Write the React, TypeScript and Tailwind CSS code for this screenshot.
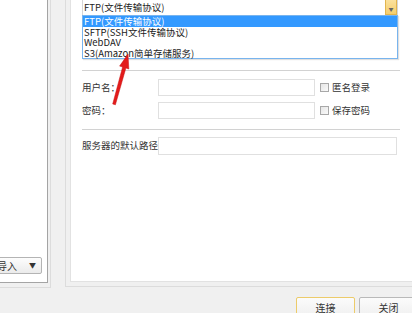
export default function App() {
  const font = { fontFamily: '"Noto Sans CJK SC", "Noto Sans", sans-serif' };
  const items = ["FTP(文件传输协议)", "SFTP(SSH文件传输协议)", "WebDAV", "S3(Amazon简单存储服务)"];

  return (
    <div
      className="relative flex h-[313px] w-[412px] flex-col overflow-hidden bg-[#f0f0f0] text-[9.5px] leading-none text-[#222]"
      style={font}
    >
      <div className="flex h-[288px]">
        {/* left list panel */}
        <div className="flex h-[288px] w-[51px] shrink-0 border-r border-b border-[#dcdcdc] pr-[2px] pb-[4px]">
          <div className="flex flex-1 flex-col justify-end overflow-hidden border-r border-b border-[#a4a4a4] bg-white pr-[5px] pb-[8px]">
            <div className="-ml-[22px] flex h-[17px] items-center justify-between rounded-[2px] border border-[#b4b4b4] bg-gradient-to-b from-[#fdfdfd] to-[#ebebeb] pr-[5px] pl-[18px] text-[10px] text-[#333]">
              <span>导入</span>
              <span className="text-[7px]">▼</span>
            </div>
          </div>
        </div>

        {/* right settings panel */}
        <div className="ml-[14px] flex h-[287px] flex-1 border-l border-b border-[#dcdcdc] pl-[4px] pb-[4px]">
          <div className="flex flex-1 flex-col border-l border-b border-[#e2e2e2] bg-white pl-[11px]">
            <div className="relative -mt-[3px] flex h-[19px] w-[316px] border border-[#d6d6d6] bg-white">
              <div className="flex flex-1 items-end pb-[3px] pl-[1px]">FTP(文件传输协议)</div>
              <div className="flex w-[12px] items-center justify-center border border-[#e2b54e] bg-gradient-to-b from-[#fbe3a0] to-[#f5cd6c]">
                <span className="mt-[3px] text-[5px] text-[#666]">▼</span>
              </div>
              <div className="absolute top-[17px] -left-[1px] z-10 w-[316px] border border-[#78b4ee] bg-white shadow-[1px_1px_1px_rgba(0,0,0,0.12)]">
                {items.map((t, i) => (
                  <div
                    key={t}
                    className={
                      i === 0
                        ? "h-[10.5px] bg-[#3399ff] pl-[1px] text-[9.5px] leading-[10.5px] text-white"
                        : "h-[10.5px] pl-[1px] text-[9.5px] leading-[10.5px]"
                    }
                  >
                    {t}
                  </div>
                ))}
              </div>
            </div>

            <div className="mt-[54px] h-[2px] w-[318px] border-t border-[#d2d2d2] bg-white" />

            <div className="mt-[7px] flex h-[17px] items-center">
              <div className="w-[76px] text-[#333]">用户名：</div>
              <div className="h-[17px] w-[157px] border border-[#e0e0e0] bg-white" />
              <div className="ml-[5px] h-[9px] w-[9px] border border-[#a8a8a8] bg-gradient-to-br from-[#e6e6e6] to-[#fafafa]" />
              <div className="ml-[3px] text-[#333]">匿名登录</div>
            </div>

            <div className="mt-[6px] flex h-[17px] items-center">
              <div className="w-[76px] text-[#333]">密码：</div>
              <div className="h-[17px] w-[157px] border border-[#e0e0e0] bg-white" />
              <div className="ml-[5px] h-[9px] w-[9px] border border-[#a8a8a8] bg-gradient-to-br from-[#e6e6e6] to-[#fafafa]" />
              <div className="ml-[3px] text-[#333]">保存密码</div>
            </div>

            <div className="mt-[10px] h-[2px] w-[318px] border-t border-[#d2d2d2] bg-white" />

            <div className="mt-[6px] flex h-[18px] items-center">
              <div className="w-[76px] text-[#333]">服务器的默认路径</div>
              <div className="h-[18px] w-[239px] border border-[#e0e0e0] bg-white" />
            </div>
          </div>
        </div>
      </div>

      {/* dialog buttons */}
      <div className="mt-[9px] flex gap-[4px] pl-[296px] text-[10px] text-[#333]">
        <div className="flex h-[22px] w-[59px] shrink-0 items-center justify-center rounded-[2px] border border-[#eccb6a] bg-gradient-to-b from-[#fbfbfb] to-[#efefef]">
          连接
        </div>
        <div className="flex h-[22px] w-[59px] shrink-0 items-center justify-center rounded-[2px] border border-[#b9b9b9] bg-gradient-to-b from-[#fbfbfb] to-[#efefef]">
          关闭
        </div>
      </div>

      {/* red annotation arrow */}
      <svg className="pointer-events-none absolute top-0 left-0 z-20" width="412" height="313">
        <polygon
          points="128,54 128.8,69 125.9,68 115.4,104.8 112.7,104 122.6,67 119.6,66.1"
          fill="#e31b1b"
          stroke="#c80f0f"
          strokeWidth="0.5"
          strokeLinejoin="round"
        />
      </svg>
    </div>
  );
}
